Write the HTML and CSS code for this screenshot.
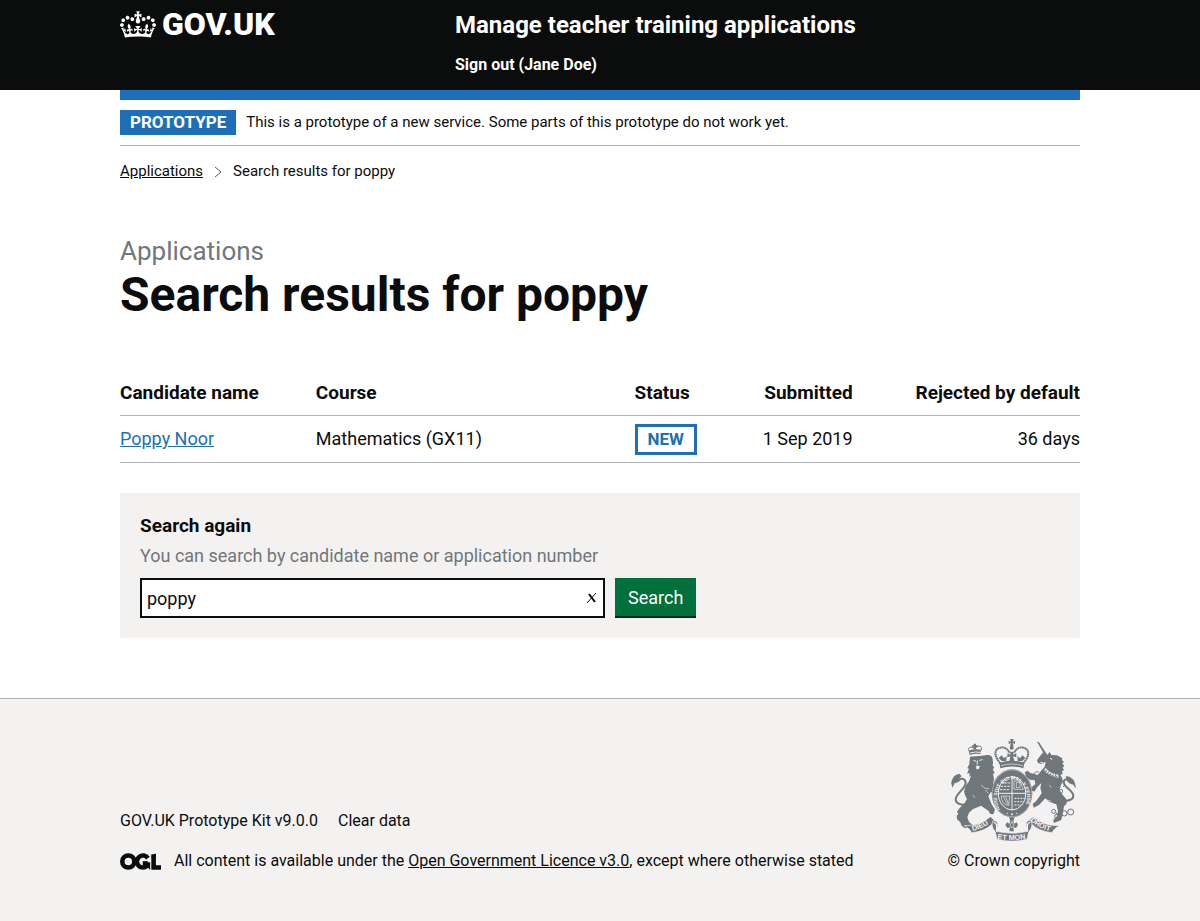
FILE: index.html
```html
<!DOCTYPE html>
<html lang="en">
<head>
  <meta charset="utf-8">
  <meta name="viewport" content="width=device-width, initial-scale=1">
  <title>Search results for poppy - Manage teacher training applications</title>
  <link rel="stylesheet" href="styles.css">
</head>
<body>
  <header class="header">
    <div class="container header-inner">
      <div class="header-logo">
        <a class="logo-link" href="#">
          <svg class="crown" viewBox="0 0 132 97" aria-hidden="true"><path fill="currentColor" fill-rule="evenodd" d="M25 30.2c3.5 1.5 7.7-.2 9.1-3.7 1.5-3.6-.2-7.8-3.9-9.2-3.6-1.4-7.6.3-9.1 3.9-1.4 3.5.3 7.5 3.9 9zM9 39.5c3.6 1.5 7.8-.2 9.2-3.7 1.5-3.6-.2-7.8-3.9-9.1-3.6-1.5-7.6.2-9.1 3.8-1.4 3.5.3 7.5 3.8 9zM4.4 57.2c3.5 1.5 7.7-.2 9.1-3.8 1.5-3.6-.2-7.7-3.9-9.1-3.5-1.5-7.6.3-9.1 3.8-1.4 3.5.3 7.6 3.9 9.1zm38.3-21.4c3.5 1.5 7.7-.2 9.1-3.8 1.5-3.6-.2-7.7-3.9-9.1-3.6-1.5-7.6.3-9.1 3.8-1.3 3.6.4 7.7 3.9 9.1zm64.4-5.6c-3.6 1.5-7.8-.2-9.1-3.7-1.5-3.6.2-7.8 3.8-9.2 3.6-1.4 7.7.3 9.2 3.9 1.3 3.5-.4 7.5-3.9 9zm15.9 9.3c-3.6 1.5-7.7-.2-9.1-3.7-1.5-3.6.2-7.8 3.7-9.1 3.6-1.5 7.7.2 9.2 3.8 1.5 3.5-.3 7.5-3.8 9zm4.7 17.7c-3.6 1.5-7.8-.2-9.2-3.8-1.5-3.6.2-7.7 3.9-9.1 3.6-1.5 7.7.3 9.2 3.8 1.3 3.5-.4 7.6-3.9 9.1zM89.3 35.8c-3.6 1.5-7.8-.2-9.2-3.8-1.4-3.6.2-7.7 3.9-9.1 3.6-1.5 7.7.3 9.2 3.8 1.4 3.6-.3 7.7-3.9 9.1zM69.7 17.7l8.9 4.7V9.3l-8.9 2.8c-.2-.3-.5-.6-.9-.9L72.4 0H59.6l3.5 11.2c-.3.3-.6.5-.9.9l-8.8-2.8v13.1l8.8-4.7c.3.3.6.7.9.9l-5 15.4v.1c-.2.8-.4 1.6-.4 2.4 0 4.1 3.1 7.5 7 8.1h.2c.3 0 .7.1 1 .1.4 0 .7 0 1-.1h.2c4-.6 7.1-4.1 7.1-8.1 0-.8-.1-1.7-.4-2.4V34l-5.1-15.4c.4-.2.7-.6 1-.9zM66 92.8c16.9 0 32.8 1.1 47.1 3.2 4-16.9 8.9-26.7 14-33.5l-9.6-3.4c1 4.9 1.1 7.2 0 10.2-1.5-1.4-3-4.3-4.2-8.7L108.6 76c2.8-2 5-3.2 7.5-3.3-4.4 9.4-10 11.9-13.6 11.2-4.3-.8-6.3-4.6-5.6-7.9 1-4.7 5.7-5.9 8-.5 4.3-8.7-3-11.4-7.6-8.8 7.1-7.2 7.9-13.5 2.1-21.1-8 6.1-8.1 12.3-4.5 20.8-4.7-5.4-12.1-2.5-9.5 6.2 3.4-5.2 7.9-2 7.2 3.1-.6 4.3-6.4 7.8-13.5 7.2-10.3-.9-10.9-8-11.2-13.8 2.5-.5 7.1 1.8 11 7.3L80.2 60c-4.1 4.4-8 5.3-12.3 5.4 1.4-4.4 8-11.6 8-11.6H55.5s6.4 7.2 7.9 11.6c-4.2-.1-8-1-12.3-5.4l1.4 16.4c3.9-5.5 8.5-7.7 10.9-7.3-.3 5.8-.9 12.8-11.1 13.8-7.2.6-12.9-2.9-13.5-7.2-.7-5 3.8-8.3 7.1-3.1 2.7-8.7-4.6-11.6-9.4-6.2 3.7-8.5 3.6-14.7-4.6-20.8-5.8 7.6-5 13.9 2.2 21.1-4.7-2.6-11.9.1-7.7 8.8 2.3-5.5 7.1-4.2 8.1.5.7 3.3-1.3 7.1-5.7 7.9-3.5.7-9-1.8-13.5-11.2 2.5.1 4.7 1.3 7.5 3.3l-4.7-15.4c-1.2 4.4-2.7 7.2-4.3 8.7-1.1-3-.9-5.3 0-10.2l-9.5 3.4c5 6.9 9.9 16.7 14 33.5 14.8-2.1 30.8-3.2 47.7-3.2z"/></svg>
          <span>GOV.UK</span>
        </a>
      </div>
      <div class="header-content">
        <a class="service-name" href="#">Manage teacher training applications</a>
        <nav class="header-nav" aria-label="Account"><a href="#">Sign out (Jane Doe)</a></nav>
      </div>
    </div>
  </header>

  <div class="container">
    <div class="phase-banner">
      <strong class="phase-tag">Prototype</strong>
      <span>This is a prototype of a new service. Some parts of this prototype do not work yet.</span>
    </div>

    <nav class="breadcrumbs" aria-label="Breadcrumb">
      <a href="#">Applications</a>
      <svg class="chevron" viewBox="0 0 8 12" aria-hidden="true"><path d="M1 1l6 5-6 5" fill="none" stroke="currentColor"/></svg>
      <span>Search results for poppy</span>
    </nav>

    <main class="main">
      <span class="caption">Applications</span>
      <h1 class="heading">Search results for poppy</h1>

      <table class="results">
        <thead>
          <tr>
            <th class="col-name" scope="col">Candidate name</th>
            <th class="col-course" scope="col">Course</th>
            <th class="col-status" scope="col">Status</th>
            <th class="col-date numeric" scope="col">Submitted</th>
            <th class="numeric" scope="col">Rejected by default</th>
          </tr>
        </thead>
        <tbody>
          <tr>
            <td><a class="link" href="#">Poppy Noor</a></td>
            <td>Mathematics (GX11)</td>
            <td><strong class="status-tag">New</strong></td>
            <td class="numeric">1 Sep 2019</td>
            <td class="numeric">36 days</td>
          </tr>
        </tbody>
      </table>

      <form class="search-panel" role="search">
        <label class="search-label" for="search">Search again</label>
        <span class="hint" id="search-hint">You can search by candidate name or application number</span>
        <div class="search-row">
          <div class="search-field">
            <input class="search-input" id="search" name="search" type="search" value="poppy" aria-describedby="search-hint">
            <button class="clear-button" type="reset" aria-label="Clear search">
              <svg viewBox="0 0 10 10" aria-hidden="true"><path d="M0 10L9 0" stroke="currentColor" stroke-width="1"/><path d="M2 1l6 8" stroke="currentColor" stroke-width="2"/></svg>
            </button>
          </div>
          <button class="search-button" type="button">Search</button>
        </div>
      </form>
    </main>
  </div>

  <footer class="footer">
    <div class="container footer-inner">
      <div class="footer-main">
        <div class="footer-links">
          <a href="#">GOV.UK Prototype Kit v9.0.0</a>
          <a href="#">Clear data</a>
        </div>
        <div class="licence">
          <svg class="ogl" viewBox="0 0 483 196" role="img" aria-label="OGL"><g fill="none" stroke="currentColor" stroke-width="54"><circle cx="98" cy="98" r="71"/><path d="M329 58A71 71 0 1 0 319 150"/><path d="M268 121H327"/><path d="M396 14V168H483"/></g><path fill="currentColor" d="M275 106h80v88h-3zM371 32l50-32v60h-50z"/></svg>
          <span>All content is available under the <a class="licence-link" href="#">Open Government Licence v3.0</a>, except where otherwise stated</span>
        </div>
      </div>
      <a class="copyright" href="#">
        <svg class="crest" viewBox="36 27 375 306" aria-hidden="true">
          <g fill="#6f777b">
            <!-- lion -->
            <path d="M93 80l36-3c11-1 22-5 28 2 6 6 3 15 6 21l-3 4 6 10-5 3 6 12-5 3 3 14-3 18 12 2 4 10-12 12-10-3-8 14 10 24 10 16-5 14-9-1-5-9-23-16-25 11-11 10-5 14 5 14 12 10-2 8H76l-9-8-3-9-10-9-1-11 5-5-4-7 8-11 15-15 7-12-5-10-4-12 5-17 10-14 7-18-6 5 1-12-8 2 6-15-5-2 6-12z"/>
            <!-- lion's crown -->
            <path d="M92 75l-3-13q16-7 37-3l-1 13q-16-3-33 3z"/>
            <path d="M104 41h7v5h5v5h-5v7h-7v-7h-5v-5h5z"/>
            <!-- unicorn -->
            <path d="M294 35l6 2 25 38-6 4z"/>
            <path d="M324 76l8-10 5 9q20-2 27 7l6 2-1 7 6 4-5 6 6 6-5 6 4 7-6 4 2 7-7 4q8 10 7 20l-6 12-3 13 7 12 13 16 1 13-8 8-5 29-4 13-22 8-1-10 10-9 4-16-5-21-22-8-11-10-19 20-16 8-3-11 10-8 17-24-4-17 3-14-12 12-9 14-9-4 4-13 8-5-2-12-14-2-11-9-5-13 9-5 8 7 10 2 12 4 8-10 13-15 3-15-13 7-10-3-3-8 11-15 9-11z"/>
            <!-- supporting crown -->
            <path d="M184 115q34-11 69 0l3-17q-38-11-75 0z"/>
            <path d="M213 27h11l-3 8 7-3v10l-7-3 3 10h-11l3-10-7 3V32l7 3zM213 65h11l-2 9 10-4v12l-10-3 4 14h-15l3-14-9 3V70l10 4z"/>
            <path d="M188 76l7 9 8-7-1 15h-14l-9-9zM250 76l-7 9-8-7 1 15h14l9-9z"/>
            <circle cx="218" cy="53" r="6"/>
          </g>
          <g fill="none" stroke="#6f777b">
            <path stroke-width="3" d="M92 65c-10-11 3-18 13-10M126 61c7-14-9-17-17-6"/>
            <path stroke-width="6" stroke-dasharray="6 1" d="M184 100c-14-16-22-36-6-45 16-8 29 2 34 14M253 100c14-16 22-36 6-45-16-8-29 2-34 14"/>
            <path stroke-width="6" d="M86 222c-18 6-37-2-36-15 2-17 28-30 30-47 1-13-12-18-22-9"/>
            <path fill="#6f777b" d="M62 132q-21 2-25 27l4 13 5-12q13-3 19-11l-6-2 8-8z"/>
            <path stroke-width="6" d="M367 212c20 3 36-3 36-15 0-16-29-25-29-40 0-7 7-12 14-8"/>
            <path fill="#6f777b" d="M381 138q27 3 29 36l-8-11q-12-1-19-12z"/>
            <path stroke-width="3" d="M299 126c-15-4-22 14-10 22M367 151c10 4 13 12 6 20"/>
            <g stroke-width="3"><circle cx="365" cy="184" r="6"/><circle cx="358" cy="211" r="6"/><circle cx="344" cy="244" r="6"/><circle cx="353" cy="259" r="6"/><circle cx="376" cy="250" r="8"/><circle cx="395" cy="246" r="9"/><path d="M350 249l9 3"/></g>
          </g>
          <!-- light details on the animals -->
          <g fill="none" stroke="#f3f2f1">
            <path stroke-width="3" d="M103 91l9 3M121 91l10-2M116 92l-2 12M93 69q16-5 33-2M304 97l8 1M333 85l7 3"/>
            <path fill="#f3f2f1" d="M111 108h11l-3 9h-6z"/>
            <path stroke-width="9" stroke-dasharray="6 2" d="M317 117q14 18 43 22"/>
            <path stroke="#6f777b" stroke-width="4" stroke-dasharray="3 4" d="M315 119q16 19 43 21"/>
            <path stroke-width="2" d="M186 107q33-10 65 0M139 180l9 10M100 195l9 8M330 165l8 8M323 210l14 4M126 165q10 12 24 12"/>
          </g>
          <!-- garter and shield -->
          <ellipse cx="219" cy="190" rx="61" ry="72" fill="#6f777b"/>
          <ellipse cx="219" cy="190" rx="59" ry="70" fill="none" stroke="#f3f2f1"/>
          <ellipse cx="219" cy="190" rx="41" ry="50" fill="#6f777b" stroke="#f3f2f1" stroke-width="3"/>
          <path id="garter" fill="none" d="M184 238A45 55 0 1 1 254 238"/>
          <text class="crest-text"><textPath href="#garter">HONI SOIT QUI MAL Y PENSE</textPath></text>
          <g fill="none" stroke="#f3f2f1" stroke-width="3">
            <path d="M219 141v98M179 190h81"/>
            <path stroke-dasharray="7 3" stroke-width="3" d="M188 159h25M185 169h28M183 179h30"/>
            <path stroke-dasharray="6 3" stroke-width="3" d="M226 205h31M226 215h27M226 225h20"/>
            <path stroke-width="2" d="M225 153h18l10 25h-28zM232 158v15h11v-15zM186 198h26l-3 29q-21-4-23-29zM193 199l12 25M200 199l8 22"/>
          </g>
          <g fill="#f3f2f1"><circle cx="205" cy="250" r="2"/><circle cx="219" cy="253" r="3"/><circle cx="233" cy="250" r="2"/></g>
          <!-- motto ribbon -->
          <g fill="#6f777b" stroke="#f3f2f1" stroke-width="2">
            <path d="M76 287q47 1 78-27l13 11-8 12q-24 22-61 25-5-12-22-21z"/>
            <path d="M361 287q-47 1-78-27l-13 11 8 12q24 22 61 25 5-12 22-21z"/>
            <path d="M162 272q-8 17 7 34l5 22q45 11 90 0l5-22q15-17 7-34-16-2-14 14l5 18q-48 11-96 0l5-18q2-15-14-14z"/>
          </g>
          <path fill="none" stroke="#f3f2f1" stroke-width="4" d="M164 277q12 1 8 24M274 277q-12 1-8 24"/>
          <path fill="#6f777b" d="M210 262h17l-4 11 3 8 7-4 4 8-6 9-8-2 2 12h-14l2-12-8 2-6-9 5-8 7 4 3-8z"/>
          <path fill="none" stroke="#f3f2f1" stroke-width="2" d="M213 286l6-12 6 12-6 8z"/>
          <path id="motto-left" fill="none" d="M101 303Q136 295 160 272"/>
          <path id="motto-centre" fill="none" d="M175 327Q219 334 266 325"/>
          <path id="motto-right" fill="none" d="M273 271Q298 297 340 305"/>
          <g class="motto-text">
            <text><textPath href="#motto-left">DIEU</textPath></text>
            <text><textPath href="#motto-centre">ET MON</textPath></text>
            <text><textPath href="#motto-right">DROIT</textPath></text>
          </g>
        </svg>
        <span>© Crown copyright</span>
      </a>
    </div>
  </footer>
</body>
</html>
```
FILE: styles.css
```css
* {
  box-sizing: border-box;
}

body {
  margin: 0;
  background: #fff;
  color: #0b0c0c;
  font-family: Roboto, "Liberation Sans", sans-serif;
  font-size: 18px;
  line-height: 25px;
}

a {
  color: inherit;
}

.container {
  max-width: 960px;
  margin: 0 auto;
}

/* Header */

.header {
  background: #0b0c0c;
  color: #fff;
}

.header-inner {
  display: flex;
  padding: 10px 0;
}

.header-inner a {
  text-decoration: none;
}

.header-logo {
  flex: 0 0 335px;
}

.logo-link {
  display: inline-flex;
  align-items: center;
  gap: 6px;
  font-size: 32px;
  font-weight: 900;
  line-height: 29px;
}

.crown {
  width: 36px;
  height: 27px;
}

.service-name,
.header-nav {
  display: block;
  font-weight: 700;
}

.service-name {
  font-size: 24px;
  line-height: 30px;
}

.header-nav {
  margin-top: 12px;
  padding-bottom: 3px;
  font-size: 16px;
  line-height: 25px;
}

/* Banner and breadcrumbs */

.phase-banner {
  display: flex;
  align-items: center;
  gap: 10px;
  padding: 10px 0;
  border-top: 10px solid #1d70b8;
  border-bottom: 1px solid #b1b4b6;
  font-size: 15px;
}

.phase-tag {
  padding: 0 10px;
  background: #1d70b8;
  color: #fff;
  font-size: 17px;
  font-weight: 700;
  text-transform: uppercase;
}

.breadcrumbs {
  display: flex;
  align-items: center;
  gap: 11px;
  padding: 13px 0 12px;
  font-size: 15px;
}

.chevron {
  width: 8px;
  height: 12px;
  color: #505a5f;
}

/* Main content */

.main {
  padding: 40px 0 60px;
}

.caption {
  display: block;
  color: #6f777b;
  font-size: 26px;
  line-height: 30px;
}

.heading {
  margin: 4px 0 50px;
  font-size: 48px;
  font-weight: 700;
  line-height: 50px;
}

.results {
  width: 100%;
  margin-bottom: 30px;
  border-collapse: collapse;
  table-layout: fixed;
}

.results th,
.results td {
  padding: 10px 20px 10px 0;
  border-bottom: 1px solid #b1b4b6;
  text-align: left;
  vertical-align: top;
}

.results th {
  font-size: 19px;
  font-weight: 700;
}

.results td {
  height: 47px;
}

.results .numeric {
  text-align: right;
}

.results th:last-child,
.results td:last-child {
  padding-right: 0;
}

.col-name {
  width: 20.4%;
}

.col-course {
  width: 33.2%;
}

.col-status {
  width: 11.8%;
}

.col-date {
  width: 13%;
}

.link {
  color: #1d70b8;
}

.status-tag {
  display: inline-block;
  margin: -2px 0 -3px;
  padding: 0 10px;
  border: 3px solid #1d70b8;
  color: #1d70b8;
  font-size: 17px;
  font-weight: 700;
  text-transform: uppercase;
  vertical-align: top;
}

.search-panel {
  padding: 20px;
  background: #f3f2f1;
}

.search-label,
.hint {
  display: block;
}

.search-label {
  margin-bottom: 5px;
  font-size: 19px;
  font-weight: 700;
}

.hint {
  margin-bottom: 10px;
  color: #6f777b;
}

.search-row {
  display: flex;
  gap: 10px;
}

.search-field {
  position: relative;
  flex: 0 1 465px;
}

.search-input {
  display: block;
  width: 100%;
  height: 40px;
  padding: 5px;
  border: 2px solid #0b0c0c;
  border-radius: 0;
  background: #fff;
  color: #0b0c0c;
  font: inherit;
  appearance: none;
}

.search-input::-webkit-search-cancel-button {
  display: none;
}

.clear-button {
  position: absolute;
  top: 12px;
  right: 5px;
  display: flex;
  padding: 3px;
  border: 0;
  background: none;
  color: #0b0c0c;
}

.clear-button svg {
  width: 10px;
  height: 10px;
}

.search-button {
  padding: 0 13px;
  border: 0;
  border-bottom: 2px solid #002d18;
  background: #00703c;
  color: #fff;
  font: inherit;
}

/* Footer */

.footer {
  border-top: 1px solid #b1b4b6;
  background: #f3f2f1;
  font-size: 16px;
  line-height: 20px;
}

.footer-inner {
  display: flex;
  justify-content: space-between;
  align-items: flex-end;
  padding: 40px 0 50px;
}

.footer-links {
  display: flex;
  gap: 20px;
  margin-bottom: 20px;
}

.footer-links a,
.copyright {
  text-decoration: none;
}

.licence {
  display: flex;
  align-items: center;
  gap: 13px;
}

.ogl {
  flex: none;
  width: 41px;
  height: 17px;
}

.copyright {
  display: flex;
  flex-direction: column;
  align-items: center;
  gap: 10px;
}

.crest {
  width: 125px;
  height: 102px;
}

.crest-text,
.motto-text {
  fill: #f3f2f1;
  font-family: "Liberation Sans", Arial, sans-serif;
  font-weight: 700;
}

.crest-text {
  font-size: 15px;
}

.motto-text {
  font-size: 22px;
}
```
